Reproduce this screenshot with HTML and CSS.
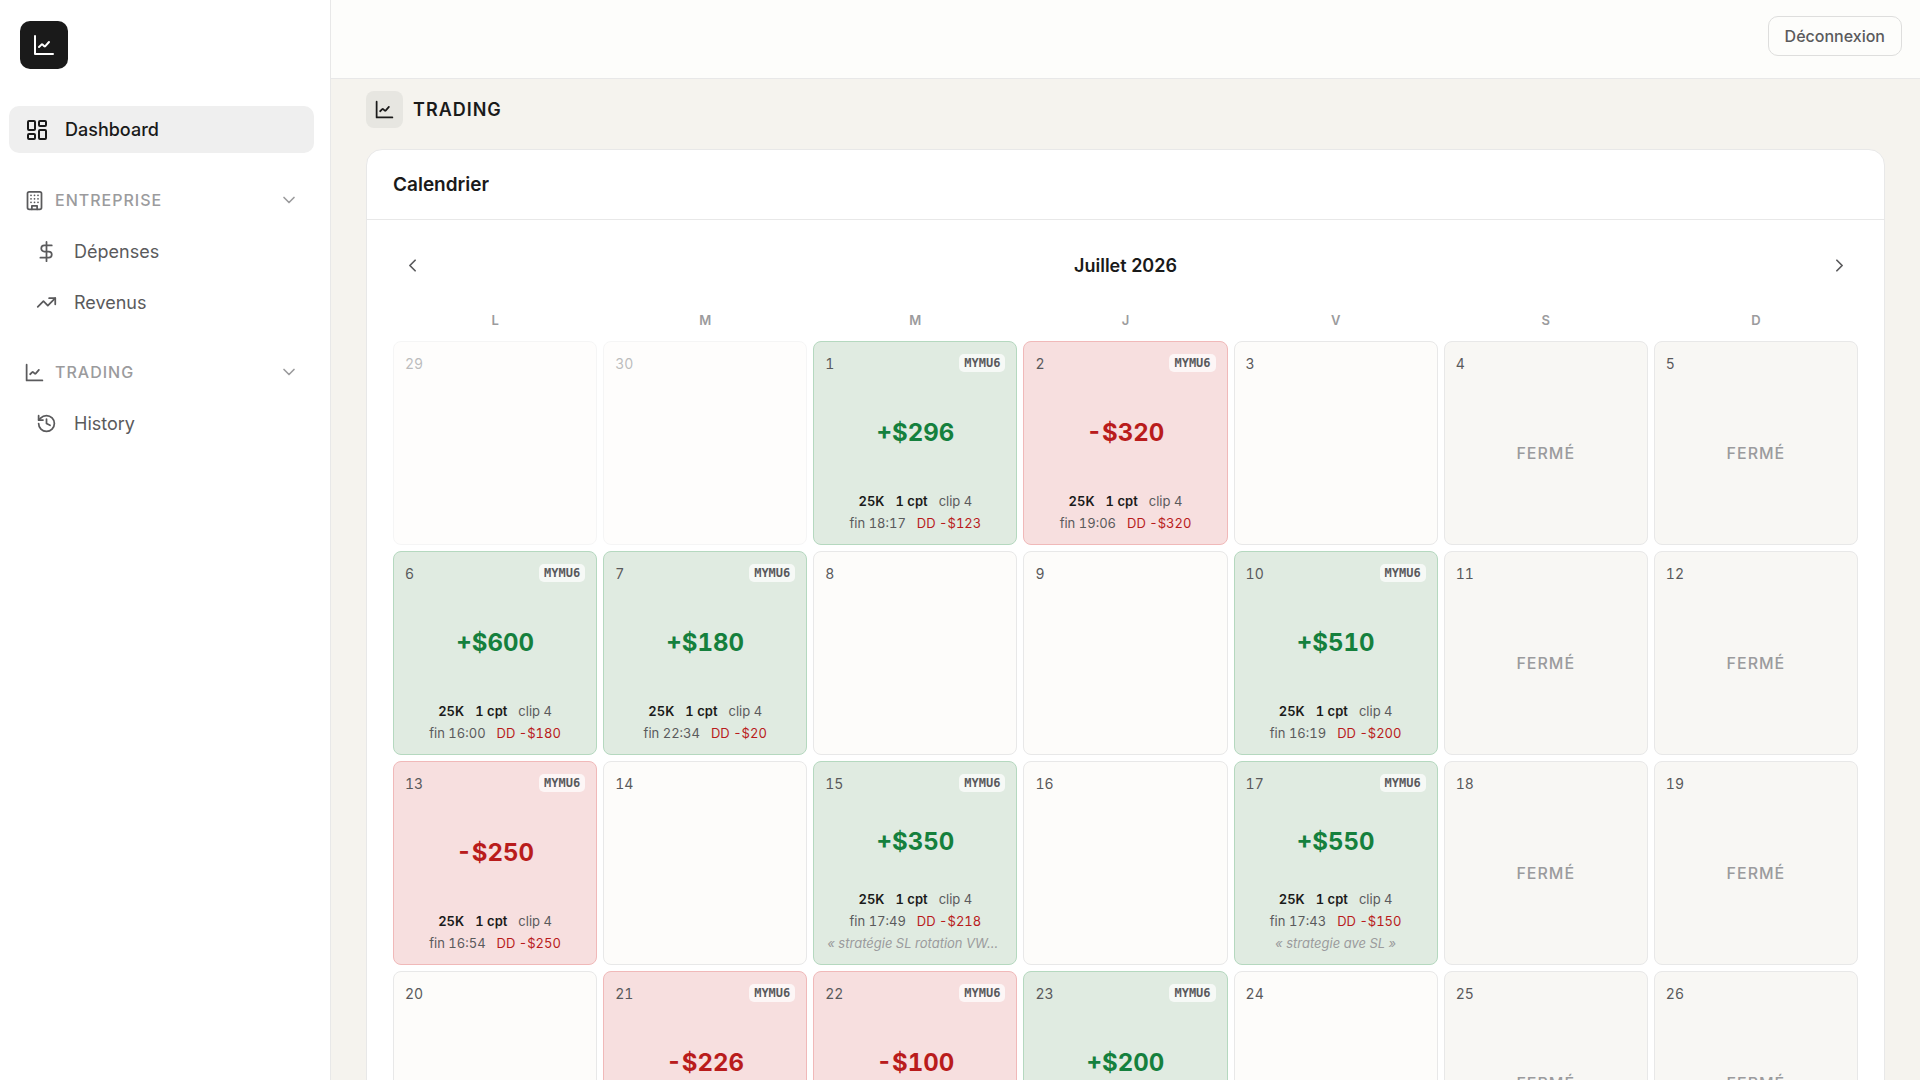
FILE: index.html
```html
<!DOCTYPE html>
<html lang="fr">
<head>
<meta charset="utf-8">
<meta name="viewport" content="width=device-width, initial-scale=1">
<title>Dashboard</title>
<link rel="stylesheet" href="styles.css">
</head>
<body>
<svg class="sprite" aria-hidden="true">
  <symbol id="i-chart" viewBox="0 0 24 24"><path d="M3 3v18h18"/><path d="M7 14l2.5-2.4q.5-.4 1 0l1.8 1.6q.5.4 1 0L17 9"/></symbol>
  <symbol id="i-dashboard" viewBox="0 0 24 24"><rect x="3" y="3" width="7" height="9" rx="1"/><rect x="14" y="3" width="7" height="5" rx="1"/><rect x="14" y="12" width="7" height="9" rx="1"/><rect x="3" y="16" width="7" height="5" rx="1"/></symbol>
  <symbol id="i-building" viewBox="0 0 24 24"><rect x="4" y="2" width="16" height="20" rx="2"/><path d="M9 22v-4h6v4M8 6h.01M16 6h.01M12 6h.01M12 10h.01M12 14h.01M16 10h.01M16 14h.01M8 10h.01M8 14h.01"/></symbol>
  <symbol id="i-dollar" viewBox="0 0 24 24"><path d="M12 1v22M18 5H9.500a3.500 3.500 0 0 0 0 7h5a3.500 3.500 0 0 1 0 7H5"/></symbol>
  <symbol id="i-trend" viewBox="0 0 24 24"><path d="M22 7l-8.500 8.500-5-5L2 17"/><path d="M15 7h7v7"/></symbol>
  <symbol id="i-history" viewBox="0 0 24 24"><path d="M3 12a9 9 0 1 0 9-9 9.750 9.750 0 0 0-6.740 2.740L3 8"/><path d="M3 3v5h5M12 7v5l4 2"/></symbol>
  <symbol id="i-down" viewBox="0 0 24 24"><path d="M6 9l6 6 6-6"/></symbol>
  <symbol id="i-left" viewBox="0 0 24 24"><path d="M15 18l-6-6 6-6"/></symbol>
  <symbol id="i-right" viewBox="0 0 24 24"><path d="M9 18l6-6-6-6"/></symbol>
</svg>
<div class="app">
  <aside class="sidebar">
    <a class="logo" href="#" aria-label="Accueil"><svg class="icon icon-lg"><use href="#i-chart"/></svg></a>
    <nav class="nav">
      <a class="nav-main" href="#"><svg class="icon icon-lg"><use href="#i-dashboard"/></svg>Dashboard</a>
      <section class="nav-group">
        <button class="nav-head" type="button"><svg class="icon"><use href="#i-building"/></svg><span>ENTREPRISE</span><svg class="icon icon-sm chevron"><use href="#i-down"/></svg></button>
        <a class="nav-link" href="#"><svg class="icon"><use href="#i-dollar"/></svg>Dépenses</a>
        <a class="nav-link" href="#"><svg class="icon"><use href="#i-trend"/></svg>Revenus</a>
      </section>
      <section class="nav-group">
        <button class="nav-head" type="button"><svg class="icon"><use href="#i-chart"/></svg><span>TRADING</span><svg class="icon icon-sm chevron"><use href="#i-down"/></svg></button>
        <a class="nav-link" href="#"><svg class="icon"><use href="#i-history"/></svg>History</a>
      </section>
    </nav>
  </aside>
  <div class="page">
    <header class="topbar"><button class="logout" type="button">Déconnexion</button></header>
    <main class="content">
      <div class="title">
        <span class="title-icon"><svg class="icon"><use href="#i-chart"/></svg></span>
        <h1>TRADING</h1>
      </div>
      <section class="card">
        <h2 class="card-head">Calendrier</h2>
        <div class="card-body">
          <div class="month">
            <button class="month-btn" type="button" aria-label="Mois précédent"><svg class="icon"><use href="#i-left"/></svg></button>
            <h3>Juillet 2026</h3>
            <button class="month-btn" type="button" aria-label="Mois suivant"><svg class="icon"><use href="#i-right"/></svg></button>
          </div>
          <div class="weekdays"><span>L</span><span>M</span><span>M</span><span>J</span><span>V</span><span>S</span><span>D</span></div>
          <div class="days">
            <div class="day out"><div class="day-head">29</div></div>
            <div class="day out"><div class="day-head">30</div></div>
            <div class="day gain"><div class="day-head">1<span class="tag">MYMU6</span></div><div class="amount">+$296</div><div class="stats"><p><b>25K</b><b>1 cpt</b><span>clip 4</span></p><p><span>fin 18:17</span><span class="dd">DD -$123</span></p></div></div>
            <div class="day loss"><div class="day-head">2<span class="tag">MYMU6</span></div><div class="amount">-$320</div><div class="stats"><p><b>25K</b><b>1 cpt</b><span>clip 4</span></p><p><span>fin 19:06</span><span class="dd">DD -$320</span></p></div></div>
            <div class="day"><div class="day-head">3</div></div>
            <div class="day closed"><div class="day-head">4</div><div class="shut">FERMÉ</div></div>
            <div class="day closed"><div class="day-head">5</div><div class="shut">FERMÉ</div></div>

            <div class="day gain"><div class="day-head">6<span class="tag">MYMU6</span></div><div class="amount">+$600</div><div class="stats"><p><b>25K</b><b>1 cpt</b><span>clip 4</span></p><p><span>fin 16:00</span><span class="dd">DD -$180</span></p></div></div>
            <div class="day gain"><div class="day-head">7<span class="tag">MYMU6</span></div><div class="amount">+$180</div><div class="stats"><p><b>25K</b><b>1 cpt</b><span>clip 4</span></p><p><span>fin 22:34</span><span class="dd">DD -$20</span></p></div></div>
            <div class="day"><div class="day-head">8</div></div>
            <div class="day"><div class="day-head">9</div></div>
            <div class="day gain"><div class="day-head">10<span class="tag">MYMU6</span></div><div class="amount">+$510</div><div class="stats"><p><b>25K</b><b>1 cpt</b><span>clip 4</span></p><p><span>fin 16:19</span><span class="dd">DD -$200</span></p></div></div>
            <div class="day closed"><div class="day-head">11</div><div class="shut">FERMÉ</div></div>
            <div class="day closed"><div class="day-head">12</div><div class="shut">FERMÉ</div></div>

            <div class="day loss"><div class="day-head">13<span class="tag">MYMU6</span></div><div class="amount">-$250</div><div class="stats"><p><b>25K</b><b>1 cpt</b><span>clip 4</span></p><p><span>fin 16:54</span><span class="dd">DD -$250</span></p></div></div>
            <div class="day"><div class="day-head">14</div></div>
            <div class="day gain"><div class="day-head">15<span class="tag">MYMU6</span></div><div class="amount">+$350</div><div class="stats"><p><b>25K</b><b>1 cpt</b><span>clip 4</span></p><p><span>fin 17:49</span><span class="dd">DD -$218</span></p><em>« stratégie SL rotation VWAP »</em></div></div>
            <div class="day"><div class="day-head">16</div></div>
            <div class="day gain"><div class="day-head">17<span class="tag">MYMU6</span></div><div class="amount">+$550</div><div class="stats"><p><b>25K</b><b>1 cpt</b><span>clip 4</span></p><p><span>fin 17:43</span><span class="dd">DD -$150</span></p><em>« strategie ave SL »</em></div></div>
            <div class="day closed"><div class="day-head">18</div><div class="shut">FERMÉ</div></div>
            <div class="day closed"><div class="day-head">19</div><div class="shut">FERMÉ</div></div>

            <div class="day"><div class="day-head">20</div></div>
            <div class="day loss"><div class="day-head">21<span class="tag">MYMU6</span></div><div class="amount">-$226</div><div class="stats"></div></div>
            <div class="day loss"><div class="day-head">22<span class="tag">MYMU6</span></div><div class="amount">-$100</div><div class="stats"></div></div>
            <div class="day gain"><div class="day-head">23<span class="tag">MYMU6</span></div><div class="amount">+$200</div><div class="stats"></div></div>
            <div class="day"><div class="day-head">24</div></div>
            <div class="day closed"><div class="day-head">25</div><div class="shut">FERMÉ</div></div>
            <div class="day closed"><div class="day-head">26</div><div class="shut">FERMÉ</div></div>
          </div>
        </div>
      </section>
    </main>
  </div>
</div>
</body>
</html>
```
FILE: styles.css
```css
:root {
  --ink: #1a1a1a;
  --text: #5a5a5c;
  --muted: #9b9b9d;
  --line: #e8e8e8;
  --green: #15803d;
  --red: #b91c1c;
}

* { box-sizing: border-box; margin: 0; }

body {
  font-family: Inter, "Liberation Sans", sans-serif;
  font-size: 18px;
  color: var(--ink);
  background: #f5f3ee;
}

a { color: inherit; text-decoration: none; }
button { font: inherit; color: inherit; background: none; border: 0; padding: 0; cursor: pointer; }

.sprite { display: none; }
.icon {
  width: 21px;
  height: 21px;
  flex: none;
  fill: none;
  stroke: currentColor;
  stroke-width: 2;
  stroke-linecap: round;
  stroke-linejoin: round;
}
.icon-lg { width: 24px; height: 24px; }
.icon-sm { width: 20px; height: 20px; }

.app { display: flex; height: 100vh; }

/* Sidebar */
.sidebar {
  flex: none;
  width: 331px;
  padding: 21px 16px 0 9px;
  background: #fff;
  border-right: 1px solid var(--line);
}
.logo {
  display: flex;
  align-items: center;
  justify-content: center;
  width: 48px;
  height: 48px;
  margin-left: 11px;
  border-radius: 10px;
  background: var(--ink);
  color: #fff;
}
.nav { margin-top: 37px; }
.nav-main {
  display: flex;
  align-items: center;
  gap: 16px;
  height: 47px;
  padding: 0 16px;
  border-radius: 10px;
  background: #efefef;
  font-weight: 500;
}
.nav-group { display: flex; flex-direction: column; gap: 5px; margin-top: 24px; }
.nav-head {
  display: flex;
  align-items: center;
  gap: 10px;
  height: 46px;
  padding: 0 15px;
  font-size: 16px;
  font-weight: 500;
  letter-spacing: 1px;
  color: var(--muted);
}
.nav-head .icon:first-child { color: var(--text); }
.nav-head .chevron { margin-left: auto; }
.nav-link {
  display: flex;
  align-items: center;
  gap: 17px;
  height: 46px;
  padding-left: 27px;
  color: var(--text);
}

/* Page */
.page { flex: 1; min-width: 0; display: flex; flex-direction: column; }
.topbar {
  flex: none;
  display: flex;
  justify-content: flex-end;
  padding: 16px 18px 22px;
  background: #fdfdfb;
  border-bottom: 1px solid var(--line);
}
.logout {
  height: 40px;
  padding: 0 16px;
  border: 1px solid #dededd;
  border-radius: 10px;
  font-size: 16px;
  font-weight: 500;
  color: var(--text);
}
.content {
  flex: 1;
  min-height: 0;
  padding: 12px 35px 35px;
  overflow-y: auto;
  scrollbar-width: none;
}
.title { display: flex; align-items: center; gap: 10px; }
.title-icon {
  display: flex;
  align-items: center;
  justify-content: center;
  width: 37px;
  height: 37px;
  border-radius: 8px;
  background: #e7e6e1;
}
.title h1 { font-size: 18px; font-weight: 600; letter-spacing: 1px; }

/* Calendar card */
.card {
  margin-top: 21px;
  border: 1px solid var(--line);
  border-radius: 16px;
  background: #fff;
}
.card-head {
  padding: 23px 26px;
  border-bottom: 1px solid var(--line);
  font-size: 19px;
  line-height: 23px;
  font-weight: 600;
}
.card-body { padding: 26px; }
.month { display: flex; align-items: center; justify-content: space-between; }
.month h3 { font-size: 18px; font-weight: 600; }
.month-btn { display: flex; align-items: center; justify-content: center; width: 38px; height: 38px; color: var(--text); }
.weekdays, .days { display: grid; grid-template-columns: repeat(7, minmax(0, 1fr)); gap: 6px; }
.weekdays {
  margin-top: 26px;
  padding-bottom: 11px;
  text-align: center;
  font-size: 13px;
  line-height: 20px;
  font-weight: 600;
  color: var(--muted);
}
.day {
  aspect-ratio: 1;
  display: flex;
  flex-direction: column;
  padding: 11px;
  border: 1px solid var(--line);
  border-radius: 8px;
  background: #fdfcfa;
  font-variant-numeric: tabular-nums;
}
.day.out { opacity: .4; }
.day.closed { background: #f8f7f4; }
.day.gain { background: #e0ebe1; border-color: #b5d8bf; }
.day.loss { background: #f7dfdf; border-color: #f0b9b9; }
.day-head {
  display: flex;
  align-items: center;
  justify-content: space-between;
  height: 20px;
  font-size: 14px;
  color: var(--text);
}
.tag {
  padding: 0 5px;
  border-radius: 5px;
  background: rgba(255, 255, 255, .7);
  font-family: "DejaVu Sans Mono", monospace;
  font-size: 12px;
  line-height: 18px;
  font-weight: 700;
}
.amount, .shut { flex: 1; display: flex; align-items: center; justify-content: center; }
.amount { font-size: 24px; font-weight: 700; }
.gain .amount { color: var(--green); }
.loss .amount { color: var(--red); }
.shut { font-size: 16px; font-weight: 500; letter-spacing: 1px; color: var(--muted); }
.stats {
  display: flex;
  flex-direction: column;
  gap: 2px;
  min-height: 42px;
  font-size: 13px;
  line-height: 20px;
  text-align: center;
  color: var(--text);
}
.stats p { display: flex; justify-content: center; gap: 11px; white-space: nowrap; }
.stats b { font-weight: 600; color: var(--ink); }
.stats .dd { color: var(--red); }
.stats em { padding: 0 2px; overflow: hidden; text-overflow: ellipsis; white-space: nowrap; color: var(--muted); }
```
